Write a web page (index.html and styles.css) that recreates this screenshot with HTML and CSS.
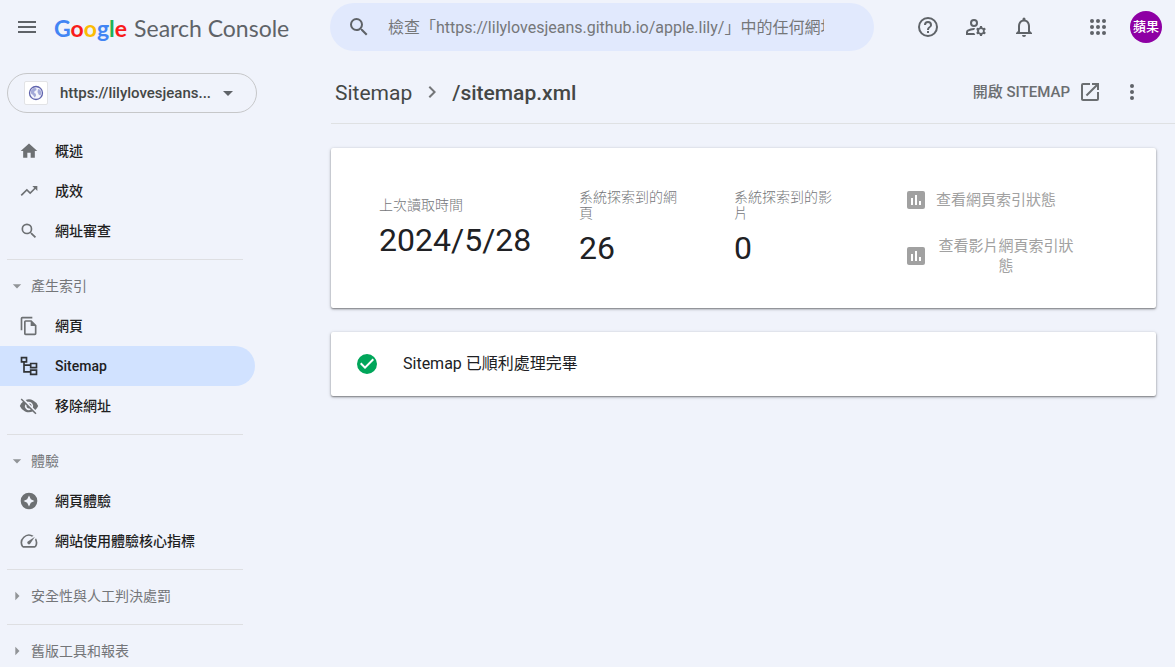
FILE: index.html
```html
<!DOCTYPE html>
<html lang="zh-Hant">
<head>
<meta charset="utf-8">
<title>Google Search Console</title>
<link rel="stylesheet" href="styles.css">
</head>
<body>
<div class="app">
  <header class="topbar">
    <div class="brand">
      <button class="icon-btn menu" type="button" aria-label="選單">
        <svg viewBox="0 0 24 24"><path d="M3 18h18v-2H3zm0-5h18v-2H3zm0-7v2h18V6z"/></svg>
      </button>
      <a class="logo" href="#"><span class="google"><span class="blue">G</span><span class="red">o</span><span class="yellow">o</span><span class="blue">g</span><span class="green">l</span><span class="red">e</span></span><span class="product">Search Console</span></a>
    </div>
    <form class="search">
      <svg class="icon" viewBox="0 0 24 24"><path d="M15.5 14h-.79l-.28-.27A6.47 6.47 0 0 0 16 9.500 6.500 6.500 0 1 0 9.500 16c1.610 0 3.090-.59 4.230-1.570l.27.28v.79l5 4.990L20.490 19zm-6 0a4.500 4.500 0 1 1 0-9 4.500 4.500 0 0 1 0 9z"/></svg>
      <input class="search-input" type="text" aria-label="網址審查" placeholder="檢查「https://lilylovesjeans.github.io/apple.lily/」中的任何網址">
    </form>
    <div class="actions">
      <button class="icon-btn" type="button" aria-label="說明">
        <svg viewBox="0 0 24 24"><path d="M11 18h2v-2h-2zm1-16a10 10 0 1 0 0 20 10 10 0 0 0 0-20zm0 18a8 8 0 1 1 0-16 8 8 0 0 1 0 16zm0-14a4 4 0 0 0-4 4h2a2 2 0 1 1 4 0c0 2-3 1.750-3 5h2c0-2.250 3-2.500 3-5a4 4 0 0 0-4-4z"/></svg>
      </button>
      <button class="icon-btn" type="button" aria-label="使用者設定">
        <svg viewBox="0 0 24 24"><path d="M4 18v-.65c0-.34.16-.66.41-.81A10.900 10.900 0 0 1 10 15h.26c.15-.69.400-1.370.73-1.970A12.800 12.800 0 0 0 3.390 14.830 2.900 2.900 0 0 0 2 17.350V20h9.260c-.42-.6-.75-1.280-.97-2zM10 12a4 4 0 1 0 0-8 4 4 0 0 0 0 8zm0-6a2 2 0 1 1 0 4 2 2 0 0 1 0-4zM20.750 16c0-.22-.03-.42-.06-.63l1.140-1.010-1-1.730-1.450.49a3.600 3.600 0 0 0-1.080-.63L18 11h-2l-.3 1.490c-.4.150-.76.360-1.080.63l-1.450-.49-1 1.730 1.140 1.010c-.3.210-.6.410-.6.630s.3.420.6.630l-1.140 1.010 1 1.730 1.450-.49c.32.270.68.480 1.080.63L16 21h2l.3-1.490c.4-.15.76-.36 1.080-.63l1.450.49 1-1.730-1.140-1.010c.03-.21.06-.41.06-.63zM17 18a2 2 0 1 1 0-4 2 2 0 0 1 0 4z"/></svg>
      </button>
      <button class="icon-btn" type="button" aria-label="通知">
        <svg viewBox="0 0 24 24"><path d="M12 22a2 2 0 0 0 2-2h-4a2 2 0 0 0 2 2zm6-6v-5c0-3.070-1.630-5.640-4.500-6.320V4a1.500 1.500 0 0 0-3 0v.68C7.640 5.360 6 7.920 6 11v5l-2 2v1h16v-1zm-2 1H8v-6c0-2.480 1.510-4.500 4-4.500s4 2.020 4 4.500z"/></svg>
      </button>
      <button class="icon-btn apps" type="button" aria-label="Google 應用程式">
        <svg viewBox="0 0 24 24"><circle cx="6" cy="6" r="2"/><circle cx="12" cy="6" r="2"/><circle cx="18" cy="6" r="2"/><circle cx="6" cy="12" r="2"/><circle cx="12" cy="12" r="2"/><circle cx="18" cy="12" r="2"/><circle cx="6" cy="18" r="2"/><circle cx="12" cy="18" r="2"/><circle cx="18" cy="18" r="2"/></svg>
      </button>
      <button class="icon-btn" type="button"><span class="avatar">蘋果</span></button>
    </div>
  </header>

  <div class="body">
    <aside class="sidebar">
      <button class="property" type="button">
        <span class="favicon"><svg viewBox="0 0 16 16"><circle cx="8" cy="8" r="6.500" fill="#f4f5fc" stroke="#6064ae" stroke-width="1.300"/><path d="M3 5.500 5.500 3l2.700.2.300 1.800-2 1.200-.3 1.800 1.600.8.200 2-1.300 1.800L5 10 3 8.500zM10 4l2.300.8L13.500 8l-1 2.500-1.700-.7L9.500 7z" fill="#a3a9d8"/></svg></span>
        <span class="property-name">https://lilylovesjeans...</span>
        <svg class="icon" viewBox="0 0 24 24"><path d="m7 10 5 5 5-5z"/></svg>
      </button>
      <nav class="nav">
        <a class="item" href="#"><svg class="nav-icon" viewBox="0 0 24 24"><path d="M10 20v-6h4v6h5v-8h3L12 3 2 12h3v8z"/></svg>概述</a>
        <a class="item" href="#"><svg class="nav-icon" viewBox="0 0 24 24"><path d="m16 6 2.290 2.290-4.880 4.880-4-4L2 16.590 3.410 18l6-6 4 4 6.300-6.290L22 12V6z"/></svg>成效</a>
        <a class="item" href="#"><svg class="nav-icon" viewBox="0 0 24 24"><path d="M15.500 14h-.79l-.28-.27A6.470 6.470 0 0 0 16 9.500 6.500 6.500 0 1 0 9.500 16c1.610 0 3.090-.59 4.230-1.570l.27.28v.79l5 4.990L20.490 19zm-6 0a4.500 4.500 0 1 1 0-9 4.500 4.500 0 0 1 0 9z"/></svg>網址審查</a>
        <hr class="rule">
        <button class="group" type="button"><svg class="caret" viewBox="0 0 24 24"><path d="m7 10 5 5 5-5z"/></svg>產生索引</button>
        <a class="item" href="#"><svg class="nav-icon" viewBox="0 0 24 24"><path d="M16 1H4a2 2 0 0 0-2 2v14h2V3h12zm-1 4H8a2 2 0 0 0-2 2v14c0 1.100.9 2 2 2h11a2 2 0 0 0 2-2V11zM8 21V7h6v5h5v9z"/></svg>網頁</a>
        <a class="item active" href="#" aria-current="page"><svg class="nav-icon" viewBox="0 0 24 24"><path d="M3 2h6v5H3zM6 7v12h8M6 11h8M14 9h7v5h-7zM14 17h7v5h-7z" fill="none" stroke="currentColor" stroke-width="2"/></svg>Sitemap</a>
        <a class="item" href="#"><svg class="nav-icon" viewBox="0 0 24 24"><path d="M12 7a5 5 0 0 1 4.640 6.830l2.920 2.920A11.800 11.800 0 0 0 22.990 12 11.830 11.830 0 0 0 8.010 4.700l2.160 2.160C10.740 7.130 11.350 7 12 7zM2 4.270l2.740 2.740A11.800 11.800 0 0 0 1 12a11.830 11.830 0 0 0 15.380 6.660l.42.42L19.730 22 21 20.730 3.270 3zM7.530 9.800l1.550 1.550a3 3 0 0 0 3.570 3.570l1.550 1.550A5 5 0 0 1 7.530 9.800zm4.310-.78 3.150 3.150.02-.16a3 3 0 0 0-3-3z"/></svg>移除網址</a>
        <hr class="rule">
        <button class="group" type="button"><svg class="caret" viewBox="0 0 24 24"><path d="m7 10 5 5 5-5z"/></svg>體驗</button>
        <a class="item" href="#"><svg class="nav-icon" viewBox="0 0 24 24"><path fill-rule="evenodd" d="M12 2a10 10 0 1 0 0 20 10 10 0 0 0 0-20zm0 3.500 2.200 4.300 4.300 2.200-4.300 2.200L12 18.500l-2.200-4.300L5.500 12l4.300-2.200z"/></svg>網頁體驗</a>
        <a class="item" href="#"><svg class="nav-icon" viewBox="0 0 24 24"><path d="m20.380 8.570-1.230 1.850a8 8 0 0 1-.22 7.580H5.070A8 8 0 0 1 15.580 6.850l1.850-1.230A10 10 0 0 0 3.350 19a2 2 0 0 0 1.720 1h13.850a2 2 0 0 0 1.740-1 10 10 0 0 0-.27-10.440zm-9.790 6.840a2 2 0 0 0 2.830 0l5.660-8.490-8.490 5.660a2 2 0 0 0 0 2.830z"/></svg>網站使用體驗核心指標</a>
        <hr class="rule">
        <button class="group" type="button"><svg class="caret" viewBox="0 0 24 24"><path d="m10 17 5-5-5-5z"/></svg>安全性與人工判決處罰</button>
        <hr class="rule">
        <button class="group" type="button"><svg class="caret" viewBox="0 0 24 24"><path d="m10 17 5-5-5-5z"/></svg>舊版工具和報表</button>
      </nav>
    </aside>

    <main class="main">
      <div class="titlebar">
        <a class="crumb" href="#">Sitemap</a>
        <svg class="chevron" viewBox="0 0 24 24"><path d="M10 6 8.590 7.410 13.170 12l-4.580 4.590L10 18l6-6z"/></svg>
        <h1 class="title">/sitemap.xml</h1>
        <button class="open" type="button">開啟 SITEMAP
          <svg class="icon" viewBox="0 0 24 24"><path d="M19 19H5V5h7V3H5a2 2 0 0 0-2 2v14c0 1.100.89 2 2 2h14a2 2 0 0 0 2-2v-7h-2zM14 3v2h3.590l-9.830 9.830 1.410 1.410L19 6.410V10h2V3z"/></svg>
        </button>
        <button class="icon-btn more" type="button" aria-label="更多">
          <svg viewBox="0 0 24 24"><circle cx="12" cy="6" r="2"/><circle cx="12" cy="12" r="2"/><circle cx="12" cy="18" r="2"/></svg>
        </button>
      </div>
      <section class="card stats">
        <div class="stat"><div class="label">上次讀取時間</div><div class="value">2024/5/28</div></div>
        <div class="stat narrow"><div class="label">系統探索到的網頁</div><div class="value">26</div></div>
        <div class="stat narrow"><div class="label">系統探索到的影片</div><div class="value">0</div></div>
        <div class="links">
          <button class="report" type="button" disabled><svg class="icon" viewBox="0 0 24 24"><path fill-rule="evenodd" d="M19 3H5a2 2 0 0 0-2 2v14c0 1.100.9 2 2 2h14a2 2 0 0 0 2-2V5a2 2 0 0 0-2-2zM9 17H7v-7h2zm4 0h-2V7h2zm4 0h-2v-4h2z"/></svg><span>查看網頁索引狀態</span></button>
          <button class="report" type="button" disabled><svg class="icon" viewBox="0 0 24 24"><path fill-rule="evenodd" d="M19 3H5a2 2 0 0 0-2 2v14c0 1.100.9 2 2 2h14a2 2 0 0 0 2-2V5a2 2 0 0 0-2-2zM9 17H7v-7h2zm4 0h-2V7h2zm4 0h-2v-4h2z"/></svg><span>查看影片網頁索引狀態</span></button>
        </div>
      </section>
      <section class="card status">
        <svg class="icon ok" viewBox="0 0 24 24"><path d="M12 2a10 10 0 1 0 0 20 10 10 0 0 0 0-20zm-2 15-5-5 1.410-1.410L10 14.170l7.590-7.590L19 8z"/></svg>
        <p class="message">Sitemap 已順利處理完畢</p>
      </section>
    </main>
  </div>
</div>
</body>
</html>
```
FILE: styles.css
```css
* { box-sizing: border-box; }

body {
  margin: 0;
  background: #f0f3fb;
  color: #202124;
  font: 400 14px/20px Roboto, "Noto Sans CJK TC", sans-serif;
}

button {
  border: 0;
  padding: 0;
  background: none;
  color: inherit;
  font: inherit;
}

a { color: inherit; text-decoration: none; }

svg { fill: currentColor; flex: none; }

.app { display: flex; flex-direction: column; height: 100vh; overflow: hidden; }

.icon { width: 24px; height: 24px; }

.icon-btn {
  display: grid;
  place-items: center;
  width: 48px;
  height: 48px;
  color: #5f6368;
}
.icon-btn svg { width: 24px; height: 24px; }

.topbar { display: flex; flex: none; padding: 3px 5px 2px 0; }

.brand { display: flex; align-items: center; flex: none; width: 330px; padding-left: 3px; }
.logo {
  display: flex;
  gap: 7px;
  padding: 2px 0 0 3px;
  font: 400 23px/32px Lato, sans-serif;
  color: #5f6368;
}
.google { font-weight: 700; }
.blue { color: #4285f4; }
.red { color: #f91b1b; }
.yellow { color: #fbbc04; }
.green { color: #1eb257; }

.search {
  display: flex;
  align-items: center;
  flex: 1;
  gap: 17px;
  min-width: 0;
  padding: 0 50px 0 17px;
  border-radius: 24px;
  background: #e1e9fd;
  color: #5f6368;
}
.search-input {
  flex: 1;
  min-width: 0;
  padding: 2px 0 0;
  border: 0;
  outline: 0;
  background: none;
  font: 400 16px/24px Roboto, "Noto Sans CJK TC", sans-serif;
}
.search-input::placeholder { color: #757779; opacity: 1; }

.actions { display: flex; flex: none; padding-left: 30px; }
.apps { margin-left: 26px; }
.avatar {
  width: 32px;
  height: 32px;
  border-radius: 50%;
  background: #8e00a4;
  color: #fff;
  font-size: 13px;
  font-weight: 500;
  line-height: 32px;
  text-align: center;
}

.body { display: flex; flex: 1; min-height: 0; }

.sidebar { flex: none; width: 331px; padding-top: 20px; overflow: hidden; }

.property {
  display: flex;
  align-items: center;
  width: 250px;
  height: 40px;
  margin-left: 7px;
  padding: 0 16px;
  border: 1px solid #c6c7c9;
  border-radius: 20px;
  color: #5f6368;
}
.favicon {
  display: grid;
  place-items: center;
  width: 24px;
  height: 24px;
  border: 1px solid #e2e3e6;
  border-radius: 2px;
  background: #fff;
}
.favicon svg { width: 16px; height: 16px; }
.property-name {
  flex: 1;
  padding-left: 12px;
  color: #444746;
  font-size: 15px;
  font-weight: 500;
  text-align: left;
}

.nav { width: 255px; padding-top: 18px; }
.item, .group { display: flex; align-items: center; width: 100%; height: 40px; }
.item {
  gap: 16px;
  padding-left: 19px;
  border-radius: 0 20px 20px 0;
  color: #1f1f1f;
  font-weight: 500;
}
.nav-icon { width: 20px; height: 20px; color: #6d7073; }
.active { background: #d1e2ff; }
.active .nav-icon { color: #303336; }
.group { gap: 4px; padding-left: 7px; color: #747679; }
.caret { width: 20px; height: 20px; color: #919497; }
.rule { height: 1px; margin: 8px 12px 6px 7px; border: 0; background: #dedfe2; }

.main { flex: 1; min-width: 0; }

.titlebar {
  display: flex;
  align-items: center;
  height: 71px;
  padding: 8px 19px 0 4px;
  border-bottom: 1px solid #dfe1e3;
  color: #444746;
}
.crumb, .title { padding-top: 2px; font-size: 21px; line-height: 28px; }
.title { margin: 0; font-weight: 500; }
.chevron { width: 24px; height: 24px; margin: 0 8px; color: #747679; }
.open {
  display: flex;
  align-items: center;
  gap: 8px;
  margin-left: auto;
  color: #6b6e71;
  font-size: 15px;
  font-weight: 500;
}
.more { margin-left: 6px; }

.card {
  margin: 24px 19px 0 0;
  border-radius: 2px;
  background: #fff;
  box-shadow: 0 1px 2px rgba(0, 0, 0, 0.45), 0 1px 4px rgba(0, 0, 0, 0.14);
}

.stats { display: flex; align-items: center; gap: 48px; padding: 32px 80px 32px 48px; }
.stat { flex: none; width: 152px; }
.narrow { width: 107px; }
.label { color: #747679; font-weight: 300; line-height: 16px; }
.value { margin-top: 8px; font-size: 32px; line-height: 38px; }

.links { display: flex; flex-direction: column; gap: 16px; width: 172px; margin-left: auto; }
.report {
  display: flex;
  align-items: center;
  gap: 8px;
  min-height: 40px;
  color: #a1a1a1;
  font-size: 15px;
}

.status { display: flex; align-items: center; gap: 24px; padding: 20px 24px; }
.ok { color: #00a65a; }
.message { margin: 0; font-size: 16px; line-height: 24px; }
```
